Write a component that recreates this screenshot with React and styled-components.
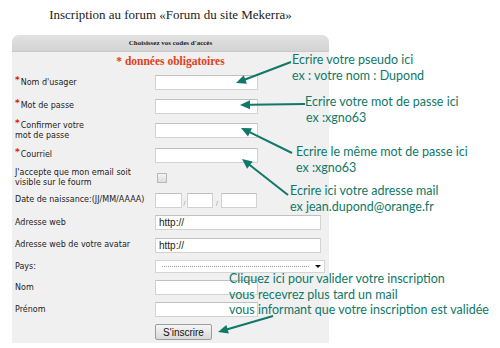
import React from 'react';
import styled, { createGlobalStyle } from 'styled-components';

const Global = createGlobalStyle`
  html, body { margin: 0; padding: 0; background: #fff; }
  body { width: 500px; height: 348px; overflow: hidden; }
`;

const Page = styled.div`
  position: relative;
  width: 500px;
  height: 348px;
  padding-left: 12px;
  box-sizing: border-box;
`;

const Title = styled.h1`
  margin: 0;
  width: 317px;
  height: 35px;
  line-height: 30px;
  text-align: center;
  font-family: "Liberation Serif", serif;
  font-weight: normal;
  font-size: 13px;
  color: #1a1a1a;
`;

const Panel = styled.div`
  width: 317px;
  height: 308px;
  background: #f0f0f0;
  border-radius: 7px 7px 0 0;
  display: flex;
  flex-direction: column;
`;

const Header = styled.div`
  height: 17px;
  border-radius: 7px 7px 0 0;
  background: linear-gradient(#e2e2e2, #d3d3d3);
  border-bottom: 1px solid #c9c9c9;
  box-sizing: border-box;
  text-align: center;
  line-height: 17px;
  font-family: "Liberation Serif", serif;
  font-weight: bold;
  font-size: 7px;
  color: #222;
`;

const Required = styled.div`
  height: 19px;
  line-height: 19px;
  text-align: center;
  font-family: "Liberation Serif", serif;
  font-weight: bold;
  font-size: 11.5px;
  color: #e0401a;
`;

const Row = styled.div`
  height: ${p => p.$h}px;
  display: grid;
  grid-template-columns: 140px 1fr;
  align-items: center;
  padding-left: 3px;
`;

const Label = styled.div`
  font-family: "DejaVu Sans", Verdana, sans-serif;
  font-size: 8px;
  line-height: 10px;
  color: #222;
`;

const Star = styled.span`
  color: #e41010;
  font-size: 9px;
  font-weight: bold;
  vertical-align: 2px;
  line-height: 0;
  margin-right: 1px;
`;

const Field = styled.div`
  display: flex;
  align-items: center;
`;

const TextInput = styled.input`
  width: ${p => p.$w}px;
  height: ${p => p.$hgt || 15}px;
  box-sizing: border-box;
  border: 1px solid #d2d2d2;
  border-top-color: #c0c0c0;
  background: #fff;
  padding: 0 3px;
  margin: 0;
  font-family: "Liberation Sans", Arial, sans-serif;
  font-size: 10px;
  color: #222;
  outline: none;
`;

const Check = styled.input`
  appearance: none;
  width: 10px;
  height: 10px;
  margin: 0 0 0 2px;
  border: 1px solid #b8b8b8;
  background: linear-gradient(#f4f4f4, #dcdcdc);
  box-sizing: border-box;
`;

const Slash = styled.span`
  width: ${p => p.$w}px;
  text-align: center;
  font-family: "DejaVu Sans", sans-serif;
  font-size: 6px;
  color: #888;
  align-self: flex-end;
  padding-bottom: 2px;
`;

const SelectBox = styled.div`
  width: 170px;
  height: 13px;
  box-sizing: border-box;
  border: 1px solid #d4d4d4;
  background: #fff;
  display: flex;
  align-items: center;
  padding: 0 3px 0 6px;
  gap: 6px;
`;

const Dots = styled.div`
  flex: 1;
  border-top: 1px dotted #9a9a9a;
`;

const Caret = styled.span`
  width: 0;
  height: 0;
  border-left: 3px solid transparent;
  border-right: 3px solid transparent;
  border-top: 3px solid #111;
`;

const Button = styled.button`
  width: 57px;
  height: 16px;
  margin: 0;
  padding: 0;
  box-sizing: border-box;
  border: 1px solid #9c9c9c;
  border-radius: 2px;
  background: linear-gradient(#f6f6f6, #d9d9d9);
  font-family: "Liberation Sans", Arial, sans-serif;
  font-size: 10px;
  color: #111;
`;

const Callout = styled.div`
  position: absolute;
  left: ${p => p.$x}px;
  top: ${p => p.$y}px;
  font-family: Lato, "Open Sans", sans-serif;
  font-size: 12.5px;
  line-height: ${p => p.$lh || 15.5}px;
  color: #0f7868;
  white-space: nowrap;
`;

const Line = styled.div`
  padding-left: ${p => p.$indent || 0}px;
`;

const ArrowLayer = styled.svg`
  position: absolute;
  left: 0;
  top: 0;
  pointer-events: none;
`;

function Arrow({ x1, y1, x2, y2 }) {
  const dx = x2 - x1;
  const dy = y2 - y1;
  const len = Math.hypot(dx, dy);
  const ux = dx / len;
  const uy = dy / len;
  const hl = 10;
  const hw = 4.5;
  const bx = x2 - ux * hl;
  const by = y2 - uy * hl;
  const px = -uy * hw;
  const py = ux * hw;
  return (
    <g fill="#0f7868" stroke="#0f7868">
      <line x1={x1} y1={y1} x2={bx + ux * 1} y2={by + uy * 1} strokeWidth="2" />
      <polygon
        stroke="none"
        points={`${x2},${y2} ${bx + px},${by + py} ${bx - px},${by - py}`}
      />
    </g>
  );
}

export default function App() {
  return (
    <Page>
      <Global />
      <Title>Inscription au forum «Forum du site Mekerra»</Title>
      <Panel>
        <Header>Choisissez vos codes d'accès</Header>
        <Required>* données obligatoires</Required>
        <Row $h={23}>
          <Label><Star>*</Star>Nom d'usager</Label>
          <Field><TextInput $w={103} /></Field>
        </Row>
        <Row $h={24}>
          <Label><Star>*</Star>Mot de passe</Label>
          <Field><TextInput $w={103} type="text" /></Field>
        </Row>
        <Row $h={25}>
          <Label><Star>*</Star>Confirmer votre<br />mot de passe</Label>
          <Field><TextInput $w={103} /></Field>
        </Row>
        <Row $h={24}>
          <Label><Star>*</Star>Courriel</Label>
          <Field><TextInput $w={103} /></Field>
        </Row>
        <Row $h={22}>
          <Label>J'accepte que mon email soit<br />visible sur le fourm</Label>
          <Field><Check type="checkbox" /></Field>
        </Row>
        <Row $h={22}>
          <Label>Date de naissance:(JJ/MM/AAAA)</Label>
          <Field>
            <TextInput $w={27} />
            <Slash $w={5}>/</Slash>
            <TextInput $w={26} />
            <Slash $w={8}>/</Slash>
            <TextInput $w={36} />
          </Field>
        </Row>
        <Row $h={23}>
          <Label>Adresse web</Label>
          <Field><TextInput $w={166} defaultValue="http://" /></Field>
        </Row>
        <Row $h={22}>
          <Label>Adresse web de votre avatar</Label>
          <Field><TextInput $w={166} defaultValue="http://" /></Field>
        </Row>
        <Row $h={21}>
          <Label>Pays:</Label>
          <Field>
            <SelectBox><Dots /><Caret /></SelectBox>
          </Field>
        </Row>
        <Row $h={21}>
          <Label>Nom</Label>
          <Field><TextInput $w={103} /></Field>
        </Row>
        <Row $h={23}>
          <Label>Prénom</Label>
          <Field><TextInput $w={103} /></Field>
        </Row>
        <Row $h={22}>
          <Label />
          <Field><Button>S'inscrire</Button></Field>
        </Row>
      </Panel>

      <ArrowLayer width="500" height="348" viewBox="0 0 500 348">
        <Arrow x1={291} y1={62} x2={236} y2={83} />
        <Arrow x1={305} y1={104} x2={240} y2={105} />
        <Arrow x1={292} y1={153} x2={241} y2={128} />
        <Arrow x1={288} y1={195} x2={242} y2={159} />
        <Arrow x1={273} y1={316} x2={218} y2={332} />
      </ArrowLayer>

      <Callout $x={292} $y={52} $lh={16}>
        <Line>Ecrire votre pseudo ici</Line>
        <Line>ex : votre nom : Dupond</Line>
      </Callout>
      <Callout $x={305} $y={94}>
        <Line>Ecrire votre mot de passe ici</Line>
        <Line $indent={1}>ex :xgno63</Line>
      </Callout>
      <Callout $x={296} $y={144}>
        <Line>Ecrire le même mot de passe ici</Line>
        <Line>ex :xgno63</Line>
      </Callout>
      <Callout $x={290} $y={183}>
        <Line>Ecrire ici votre adresse mail</Line>
        <Line>ex jean.dupond@orange.fr</Line>
      </Callout>
      <Callout $x={229} $y={271}>
        <Line>Cliquez ici pour valider votre inscription</Line>
        <Line>vous recevrez plus tard un mail</Line>
        <Line>vous informant que votre inscription est validée</Line>
      </Callout>
    </Page>
  );
}
